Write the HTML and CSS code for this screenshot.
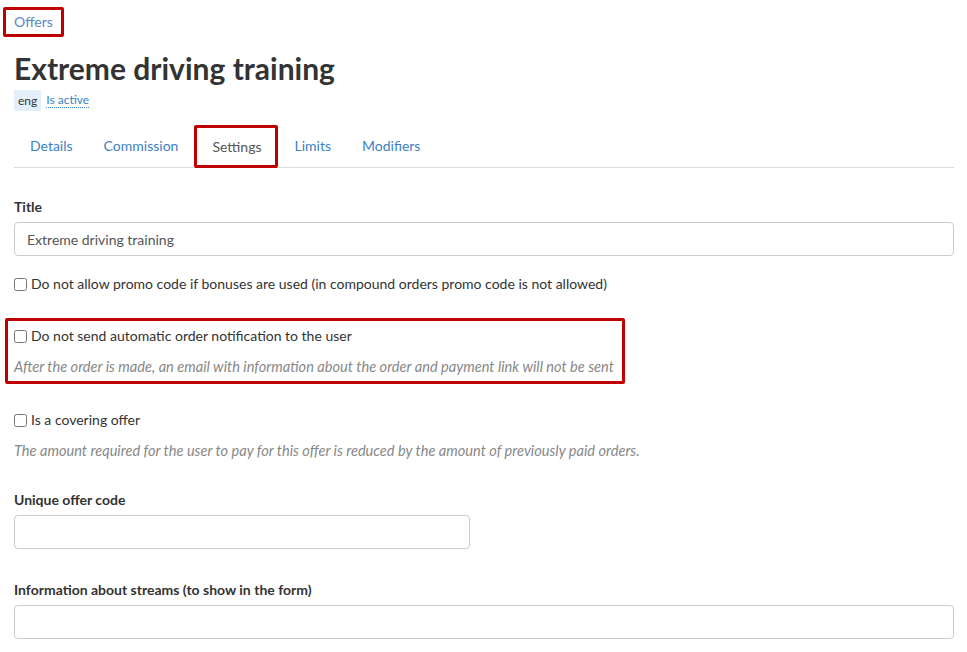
FILE: index.html
```html
<!DOCTYPE html>
<html lang="en">
<head>
<meta charset="utf-8">
<title>Extreme driving training</title>
<link rel="stylesheet" href="styles.css">
</head>
<body>
<div class="page">
  <nav class="crumbs"><a class="crumb mark" href="#">Offers</a></nav>
  <h1 class="title">Extreme driving training</h1>
  <div class="meta">
    <span class="badge">eng</span>
    <a class="status" href="#">Is active</a>
  </div>
  <ul class="tabs">
    <li class="tab"><a href="#">Details</a></li>
    <li class="tab"><a href="#">Commission</a></li>
    <li class="tab active mark"><a href="#">Settings</a></li>
    <li class="tab"><a href="#">Limits</a></li>
    <li class="tab"><a href="#">Modifiers</a></li>
  </ul>

  <form class="form">
    <div class="group group-title">
      <label class="label">Title</label>
      <input class="control" type="text" value="Extreme driving training">
    </div>

    <div class="check check-promo">
      <label><input type="checkbox"> Do not allow promo code if bonuses are used (in compound orders promo code is not allowed)</label>
    </div>

    <div class="check boxed mark">
      <label><input type="checkbox"> Do not send automatic order notification to the user</label>
      <p class="help">After the order is made, an email with information about the order and payment link will not be sent</p>
    </div>

    <div class="check check-cover">
      <label><input type="checkbox"> Is a covering offer</label>
      <p class="help">The amount required for the user to pay for this offer is reduced by the amount of previously paid orders.</p>
    </div>

    <div class="group group-code">
      <label class="label">Unique offer code</label>
      <input class="control half" type="text">
    </div>

    <div class="group">
      <label class="label">Information about streams (to show in the form)</label>
      <input class="control" type="text">
    </div>
  </form>
</div>
</body>
</html>
```
FILE: styles.css
```css
* { box-sizing: border-box; }
html, body { margin: 0; background: #fff; }
body {
  font-family: Lato, "Open Sans", Arial, sans-serif;
  font-size: 14px;
  color: #333;
}
.page { padding: 7px 13px 0 14px; }
a { color: #3d7fc4; text-decoration: none; }

.mark { border: 3px solid #c00000; border-radius: 2px; }

.crumbs { height: 29px; }
.crumb {
  display: inline-block;
  margin-left: -11px;
  padding: 4px 8px 4px 8px;
  line-height: 16px;
  color: #5b87c7;
}

.title {
  margin: 16px 0 5px;
  font-size: 30px;
  line-height: 32px;
  font-weight: 700;
  color: #333;
}

.meta { display: flex; align-items: center; gap: 5px; height: 22px; }
.badge {
  background: #e3effb;
  padding: 0 4px;
  line-height: 21px;
  font-size: 12px;
  color: #333;
}
.status {
  font-size: 12px;
  border-bottom: 1px dotted #3d7fc4;
  line-height: 14px;
}

.tabs {
  list-style: none;
  margin: 14px 0 0;
  padding: 0 0 0 1px;
  display: flex;
  border-bottom: 1px solid #ddd;
  height: 43px;
}
.tab { display: flex; align-items: center; }
.tab a { display: block; padding: 0 15px; line-height: 40px; }
.tab + .tab { margin-left: 1px; }
.tab.active { margin: 0 0 -1px 1px; height: 43px; }
.tab.active a { color: #555; padding: 0 14px 0 15px; }

.form { padding-top: 31px; }
.group { margin-bottom: 31px; }
.group-title { margin-bottom: 18px; }
.group-code { margin-bottom: 33px; }
.label {
  display: block;
  font-weight: 700;
  margin-bottom: 7px;
  line-height: 16px;
}
.control {
  display: block;
  width: 100%;
  height: 34px;
  padding: 6px 12px;
  font: inherit;
  color: #555;
  border: 1px solid #ccc;
  border-radius: 4px;
  background: #fff;
}
.control.half { width: 456px; }

.check { margin-bottom: 26px; }
.check-promo { margin-bottom: 16px; }
.check-cover { margin-bottom: 31px; }
.check label { display: flex; align-items: center; line-height: 20px; }
.check input {
  margin: 0 4px 0 0;
  width: 13px;
  height: 13px;
}
.help {
  margin: 11px 0 0;
  font-style: italic;
  font-size: 14.6px;
  color: #888;
  line-height: 20px;
}
.boxed {
  display: inline-block;
  margin-left: -9px;
  padding: 5px 8px 4px 6px;
  margin-top: 8px;
}
```
